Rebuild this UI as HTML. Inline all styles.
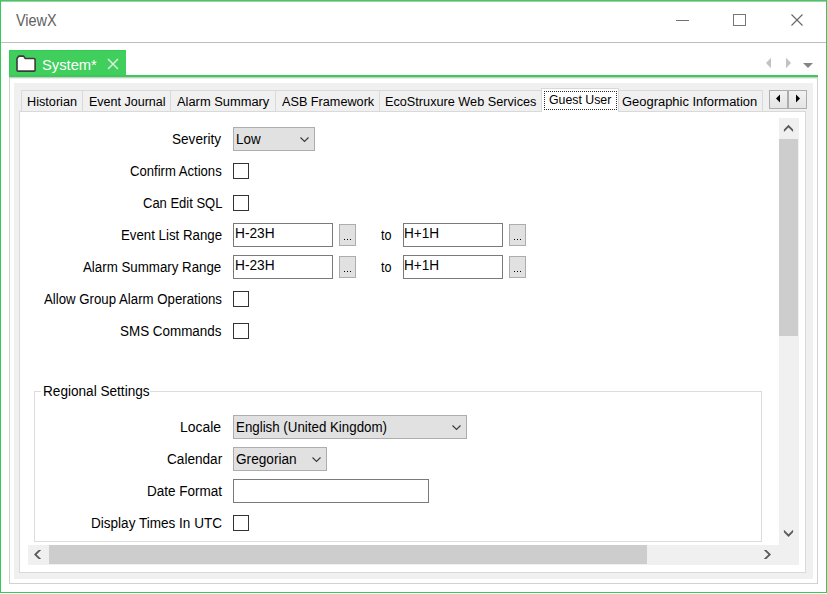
<!DOCTYPE html>
<html><head><meta charset="utf-8"><style>
html,body{margin:0;padding:0;width:827px;height:594px;overflow:hidden;background:#fff;position:relative;font-family:"Liberation Sans",sans-serif}
</style></head><body>
<div style="position:absolute;left:0;top:0;width:825px;height:591px;border:1px solid #33cb54"></div>
<div style="position:absolute;left:16.10px;top:13px;font-size:16px;line-height:16px;color:#616161;white-space:nowrap;transform:scaleX(0.9022);transform-origin:0 0;">ViewX</div>
<div style="position:absolute;left:1px;top:42px;width:825px;height:1px;background:#bebebe"></div>
<div style="position:absolute;left:1px;top:1px;width:825px;height:1px;background:#acc8b2"></div>
<div style="position:absolute;left:0px;top:0px;width:827px;height:1px;background:#3ccd5a"></div>
<div style="position:absolute;left:676px;top:20px;width:13px;height:1px;background:#707070"></div>
<div style="position:absolute;left:733px;top:14px;width:13px;height:12px;border:1px solid #767676;box-sizing:border-box"></div>
<svg style="position:absolute;left:790px;top:13px" width="15" height="15" viewBox="0 0 15 15"><path d="M1.5 1.5 L12.5 12.5 M12.5 1.5 L1.5 12.5" stroke="#666" stroke-width="1.1" fill="none"/></svg>
<div style="position:absolute;left:9px;top:50px;width:117px;height:27px;background:#40ce5c;border-top:1px solid #33cb54;border-left:1px solid #33cb54;box-sizing:border-box"></div>
<div style="position:absolute;left:9px;top:75px;width:809px;height:2px;background:#37cc55"></div>
<svg style="position:absolute;left:14px;top:54px" width="24" height="19" viewBox="0 0 24 19"><path d="M3 4.6 L4.9 2.1 L9.6 2.1 L11.3 4.5 L19.9 4.5 Q21.1 4.5 21.1 5.7 L21.1 15.9 Q21.1 17.1 19.9 17.1 L4.2 17.1 Q3 17.1 3 15.9 Z" fill="#fff" stroke="#3b3b3b" stroke-width="1.6" stroke-linejoin="round"/></svg>
<div style="position:absolute;left:41.75px;top:57px;font-size:15.5px;line-height:15.5px;color:#ffffff;white-space:nowrap;transform:scaleX(0.9500);transform-origin:0 0;">System*</div>
<svg style="position:absolute;left:106px;top:57px" width="14" height="14" viewBox="0 0 14 14"><path d="M2 2 L12 12 M12 2 L2 12" stroke="#d6f2db" stroke-width="1.5" fill="none"/></svg>
<svg style="position:absolute;left:764px;top:56px" width="50" height="14" viewBox="0 0 50 14"><path d="M2 7 L7 1.8 L7 12.2 Z" fill="#c2c2c2"/><path d="M22 1.8 L27 7 L22 12.2 Z" fill="#c2c2c2"/><path d="M39 7 L49 7 L44 12 Z" fill="#858585"/></svg>
<div style="position:absolute;left:9px;top:77px;width:809px;height:507px;border:1px solid #d2d2d2;border-top-color:#cccccc;box-sizing:border-box;background:#fff"></div>
<div style="position:absolute;left:14px;top:83px;width:799px;height:496px;background:#f0f0f0"></div>
<div style="position:absolute;left:10px;top:78px;width:807px;height:1px;background:#ececec"></div>
<div style="position:absolute;left:19px;top:111px;width:787px;height:462px;border:1px solid #d9d9d9;box-sizing:border-box;background:#fff"></div>
<div style="position:absolute;left:21px;top:90px;width:62px;height:22px;border:1px solid #d9d9d9;border-right:none;box-sizing:border-box;background:#f0f0f0"></div>
<div style="position:absolute;left:82px;top:90px;width:89px;height:22px;border:1px solid #d9d9d9;border-right:none;box-sizing:border-box;background:#f0f0f0"></div>
<div style="position:absolute;left:170px;top:90px;width:106px;height:22px;border:1px solid #d9d9d9;border-right:none;box-sizing:border-box;background:#f0f0f0"></div>
<div style="position:absolute;left:275px;top:90px;width:105px;height:22px;border:1px solid #d9d9d9;border-right:none;box-sizing:border-box;background:#f0f0f0"></div>
<div style="position:absolute;left:379px;top:90px;width:163px;height:22px;border:1px solid #d9d9d9;border-right:none;box-sizing:border-box;background:#f0f0f0"></div>
<div style="position:absolute;left:618px;top:90px;width:145px;height:22px;border:1px solid #d9d9d9;box-sizing:border-box;background:#f0f0f0"></div>
<div style="position:absolute;left:541px;top:88px;width:78px;height:24px;border:1px solid #d9d9d9;border-bottom:none;box-sizing:border-box;background:#fff"></div>
<div style="position:absolute;left:544px;top:91px;width:73px;height:19px;border:1px dotted #2a2a2a;box-sizing:border-box"></div>
<div style="position:absolute;left:26.99px;top:96px;font-size:12.5px;line-height:12.5px;color:#000;white-space:nowrap;transform:scaleX(1.0146);transform-origin:0 0;">Historian</div>
<div style="position:absolute;left:88.60px;top:96px;font-size:12.5px;line-height:12.5px;color:#000;white-space:nowrap;transform:scaleX(1.0013);transform-origin:0 0;">Event Journal</div>
<div style="position:absolute;left:177.10px;top:96px;font-size:12.5px;line-height:12.5px;color:#000;white-space:nowrap;transform:scaleX(1.0300);transform-origin:0 0;">Alarm Summary</div>
<div style="position:absolute;left:282.20px;top:96px;font-size:12.5px;line-height:12.5px;color:#000;white-space:nowrap;transform:scaleX(1.0132);transform-origin:0 0;">ASB Framework</div>
<div style="position:absolute;left:385.38px;top:96px;font-size:12.5px;line-height:12.5px;color:#000;white-space:nowrap;transform:scaleX(1.0155);transform-origin:0 0;">EcoStruxure Web Services</div>
<div style="position:absolute;left:548.91px;top:94px;font-size:12.5px;line-height:12.5px;color:#000;white-space:nowrap;transform:scaleX(0.9855);transform-origin:0 0;">Guest User</div>
<div style="position:absolute;left:622.07px;top:96px;font-size:12.5px;line-height:12.5px;color:#000;white-space:nowrap;transform:scaleX(1.0349);transform-origin:0 0;">Geographic Information</div>
<div style="position:absolute;left:769px;top:90px;width:19px;height:19px;border:1px solid #adadad;box-sizing:border-box;background:linear-gradient(#f2f2f2,#e4e4e4)"></div>
<div style="position:absolute;left:788px;top:90px;width:19px;height:19px;border:1px solid #adadad;box-sizing:border-box;background:linear-gradient(#f2f2f2,#e4e4e4)"></div>
<svg style="position:absolute;left:769px;top:90px" width="38" height="19" viewBox="0 0 38 19"><path d="M7 8.5 L11 4.5 L11 12.5 Z" fill="#000"/><path d="M27 4.5 L31 8.5 L27 12.5 Z" fill="#000"/></svg>
<div style="position:absolute;left:779px;top:118px;width:20px;height:447px;background:#f0f0f0"></div>
<div style="position:absolute;left:779px;top:139px;width:19px;height:197px;background:#cdcdcd"></div>
<svg style="position:absolute;left:779px;top:118px" width="20" height="20" viewBox="0 0 20 20"><path d="M4.9 11.4 L9.5 6.8 L14.1 11.4 L14.1 14 L9.5 9.4 L4.9 14 Z" fill="#5a5a5a"/></svg>
<svg style="position:absolute;left:779px;top:522px" width="20" height="20" viewBox="0 0 20 20"><path d="M4.9 7.7 L9.5 12.3 L14.1 7.7 L14.1 10.3 L9.5 14.9 L4.9 10.3 Z" fill="#5a5a5a"/></svg>
<div style="position:absolute;left:28px;top:545px;width:771px;height:20px;background:#f0f0f0"></div>
<div style="position:absolute;left:49px;top:545px;width:598px;height:19px;background:#cdcdcd"></div>
<svg style="position:absolute;left:28px;top:545px" width="20" height="20" viewBox="0 0 20 20"><path d="M10.6 4.9 L13.2 4.9 L8.6 9.5 L13.2 14.1 L10.6 14.1 L6 9.5 Z" fill="#5a5a5a"/></svg>
<svg style="position:absolute;left:757px;top:545px" width="20" height="20" viewBox="0 0 20 20"><path d="M6.8 4.9 L9.4 4.9 L14 9.5 L9.4 14.1 L6.8 14.1 L11.4 9.5 Z" fill="#5a5a5a"/></svg>
<div style="position:absolute;left:34px;top:391px;width:728px;height:151px;border:1px solid #dcdcdc;box-sizing:border-box"></div>
<div style="position:absolute;left:41px;top:385px;width:109px;height:11px;background:#fff"></div>
<div style="position:absolute;left:172.03px;top:132px;font-size:14px;line-height:14px;color:#000;white-space:nowrap;transform:scaleX(0.9700);transform-origin:0 0;">Severity</div>
<div style="position:absolute;left:129.56px;top:164px;font-size:14px;line-height:14px;color:#000;white-space:nowrap;transform:scaleX(0.9351);transform-origin:0 0;">Confirm Actions</div>
<div style="position:absolute;left:142.77px;top:196px;font-size:14px;line-height:14px;color:#000;white-space:nowrap;transform:scaleX(0.9274);transform-origin:0 0;">Can Edit SQL</div>
<div style="position:absolute;left:120.55px;top:228px;font-size:14px;line-height:14px;color:#000;white-space:nowrap;transform:scaleX(0.9476);transform-origin:0 0;">Event List Range</div>
<div style="position:absolute;left:83.40px;top:260px;font-size:14px;line-height:14px;color:#000;white-space:nowrap;transform:scaleX(0.9503);transform-origin:0 0;">Alarm Summary Range</div>
<div style="position:absolute;left:43.50px;top:292px;font-size:14px;line-height:14px;color:#000;white-space:nowrap;transform:scaleX(0.9452);transform-origin:0 0;">Allow Group Alarm Operations</div>
<div style="position:absolute;left:120.34px;top:324px;font-size:14px;line-height:14px;color:#000;white-space:nowrap;transform:scaleX(0.9587);transform-origin:0 0;">SMS Commands</div>
<div style="position:absolute;left:180.31px;top:420px;font-size:14px;line-height:14px;color:#000;white-space:nowrap;transform:scaleX(0.9950);transform-origin:0 0;">Locale</div>
<div style="position:absolute;left:166.63px;top:452px;font-size:14px;line-height:14px;color:#000;white-space:nowrap;transform:scaleX(0.9714);transform-origin:0 0;">Calendar</div>
<div style="position:absolute;left:147.04px;top:484px;font-size:14px;line-height:14px;color:#000;white-space:nowrap;transform:scaleX(0.9649);transform-origin:0 0;">Date Format</div>
<div style="position:absolute;left:90.63px;top:516px;font-size:14px;line-height:14px;color:#000;white-space:nowrap;transform:scaleX(0.9679);transform-origin:0 0;">Display Times In UTC</div>
<div style="position:absolute;left:42.63px;top:384px;font-size:14px;line-height:14px;color:#000;white-space:nowrap;transform:scaleX(0.9713);transform-origin:0 0;">Regional Settings</div>
<div style="position:absolute;left:233px;top:127px;width:82px;height:24px;border:1px solid #adadad;box-sizing:border-box;background:#e1e1e1"></div>
<svg style="position:absolute;left:298px;top:135px" width="12" height="8" viewBox="0 0 12 8"><path d="M2.5 2.5 L6.5 6.5 L10.5 2.5" stroke="#3a3a3a" stroke-width="1.1" fill="none"/></svg>
<div style="position:absolute;left:236.44px;top:132px;font-size:14px;line-height:14px;color:#000;white-space:nowrap;transform:scaleX(0.9560);transform-origin:0 0;">Low</div>
<div style="position:absolute;left:233px;top:163px;width:16px;height:16px;border:1px solid #333;box-sizing:border-box;background:#fff"></div>
<div style="position:absolute;left:233px;top:195px;width:16px;height:16px;border:1px solid #333;box-sizing:border-box;background:#fff"></div>
<div style="position:absolute;left:233px;top:223px;width:100px;height:24px;border:1px solid #7a7a7a;box-sizing:border-box;background:#fff"></div>
<div style="position:absolute;left:234.72px;top:226px;font-size:14px;line-height:14px;color:#000;white-space:nowrap;transform:scaleX(0.9789);transform-origin:0 0;">H-23H</div>
<div style="position:absolute;left:339px;top:224px;width:17px;height:22px;border:1px solid #adadad;box-sizing:border-box;background:#e1e1e1"></div>
<svg style="position:absolute;left:339px;top:224px" width="17" height="22" viewBox="0 0 17 22"><rect x="5" y="15" width="1" height="1" fill="#000"/><rect x="8" y="15" width="1" height="1" fill="#000"/><rect x="11" y="15" width="1" height="1" fill="#000"/></svg>
<div style="position:absolute;left:381.30px;top:228px;font-size:14px;line-height:14px;color:#000;white-space:nowrap;transform:scaleX(0.9000);transform-origin:0 0;">to</div>
<div style="position:absolute;left:403px;top:223px;width:100px;height:24px;border:1px solid #7a7a7a;box-sizing:border-box;background:#fff"></div>
<div style="position:absolute;left:404.43px;top:226px;font-size:14px;line-height:14px;color:#000;white-space:nowrap;transform:scaleX(0.9706);transform-origin:0 0;">H+1H</div>
<div style="position:absolute;left:509px;top:224px;width:17px;height:22px;border:1px solid #adadad;box-sizing:border-box;background:#e1e1e1"></div>
<svg style="position:absolute;left:509px;top:224px" width="17" height="22" viewBox="0 0 17 22"><rect x="5" y="15" width="1" height="1" fill="#000"/><rect x="8" y="15" width="1" height="1" fill="#000"/><rect x="11" y="15" width="1" height="1" fill="#000"/></svg>
<div style="position:absolute;left:233px;top:255px;width:100px;height:24px;border:1px solid #7a7a7a;box-sizing:border-box;background:#fff"></div>
<div style="position:absolute;left:234.72px;top:258px;font-size:14px;line-height:14px;color:#000;white-space:nowrap;transform:scaleX(0.9789);transform-origin:0 0;">H-23H</div>
<div style="position:absolute;left:339px;top:256px;width:17px;height:22px;border:1px solid #adadad;box-sizing:border-box;background:#e1e1e1"></div>
<svg style="position:absolute;left:339px;top:256px" width="17" height="22" viewBox="0 0 17 22"><rect x="5" y="15" width="1" height="1" fill="#000"/><rect x="8" y="15" width="1" height="1" fill="#000"/><rect x="11" y="15" width="1" height="1" fill="#000"/></svg>
<div style="position:absolute;left:381.30px;top:260px;font-size:14px;line-height:14px;color:#000;white-space:nowrap;transform:scaleX(0.9000);transform-origin:0 0;">to</div>
<div style="position:absolute;left:403px;top:255px;width:100px;height:24px;border:1px solid #7a7a7a;box-sizing:border-box;background:#fff"></div>
<div style="position:absolute;left:404.43px;top:258px;font-size:14px;line-height:14px;color:#000;white-space:nowrap;transform:scaleX(0.9706);transform-origin:0 0;">H+1H</div>
<div style="position:absolute;left:509px;top:256px;width:17px;height:22px;border:1px solid #adadad;box-sizing:border-box;background:#e1e1e1"></div>
<svg style="position:absolute;left:509px;top:256px" width="17" height="22" viewBox="0 0 17 22"><rect x="5" y="15" width="1" height="1" fill="#000"/><rect x="8" y="15" width="1" height="1" fill="#000"/><rect x="11" y="15" width="1" height="1" fill="#000"/></svg>
<div style="position:absolute;left:233px;top:291px;width:16px;height:16px;border:1px solid #333;box-sizing:border-box;background:#fff"></div>
<div style="position:absolute;left:233px;top:323px;width:16px;height:16px;border:1px solid #333;box-sizing:border-box;background:#fff"></div>
<div style="position:absolute;left:233px;top:415px;width:234px;height:24px;border:1px solid #adadad;box-sizing:border-box;background:#e1e1e1"></div>
<svg style="position:absolute;left:450px;top:423px" width="12" height="8" viewBox="0 0 12 8"><path d="M2.5 2.5 L6.5 6.5 L10.5 2.5" stroke="#3a3a3a" stroke-width="1.1" fill="none"/></svg>
<div style="position:absolute;left:236.45px;top:420px;font-size:14px;line-height:14px;color:#000;white-space:nowrap;transform:scaleX(0.9510);transform-origin:0 0;">English (United Kingdom)</div>
<div style="position:absolute;left:233px;top:447px;width:94px;height:24px;border:1px solid #adadad;box-sizing:border-box;background:#e1e1e1"></div>
<svg style="position:absolute;left:310px;top:455px" width="12" height="8" viewBox="0 0 12 8"><path d="M2.5 2.5 L6.5 6.5 L10.5 2.5" stroke="#3a3a3a" stroke-width="1.1" fill="none"/></svg>
<div style="position:absolute;left:236.33px;top:452px;font-size:14px;line-height:14px;color:#000;white-space:nowrap;transform:scaleX(0.9738);transform-origin:0 0;">Gregorian</div>
<div style="position:absolute;left:233px;top:479px;width:196px;height:24px;border:1px solid #7a7a7a;box-sizing:border-box;background:#fff"></div>
<div style="position:absolute;left:233px;top:515px;width:16px;height:16px;border:1px solid #333;box-sizing:border-box;background:#fff"></div>
</body></html>
